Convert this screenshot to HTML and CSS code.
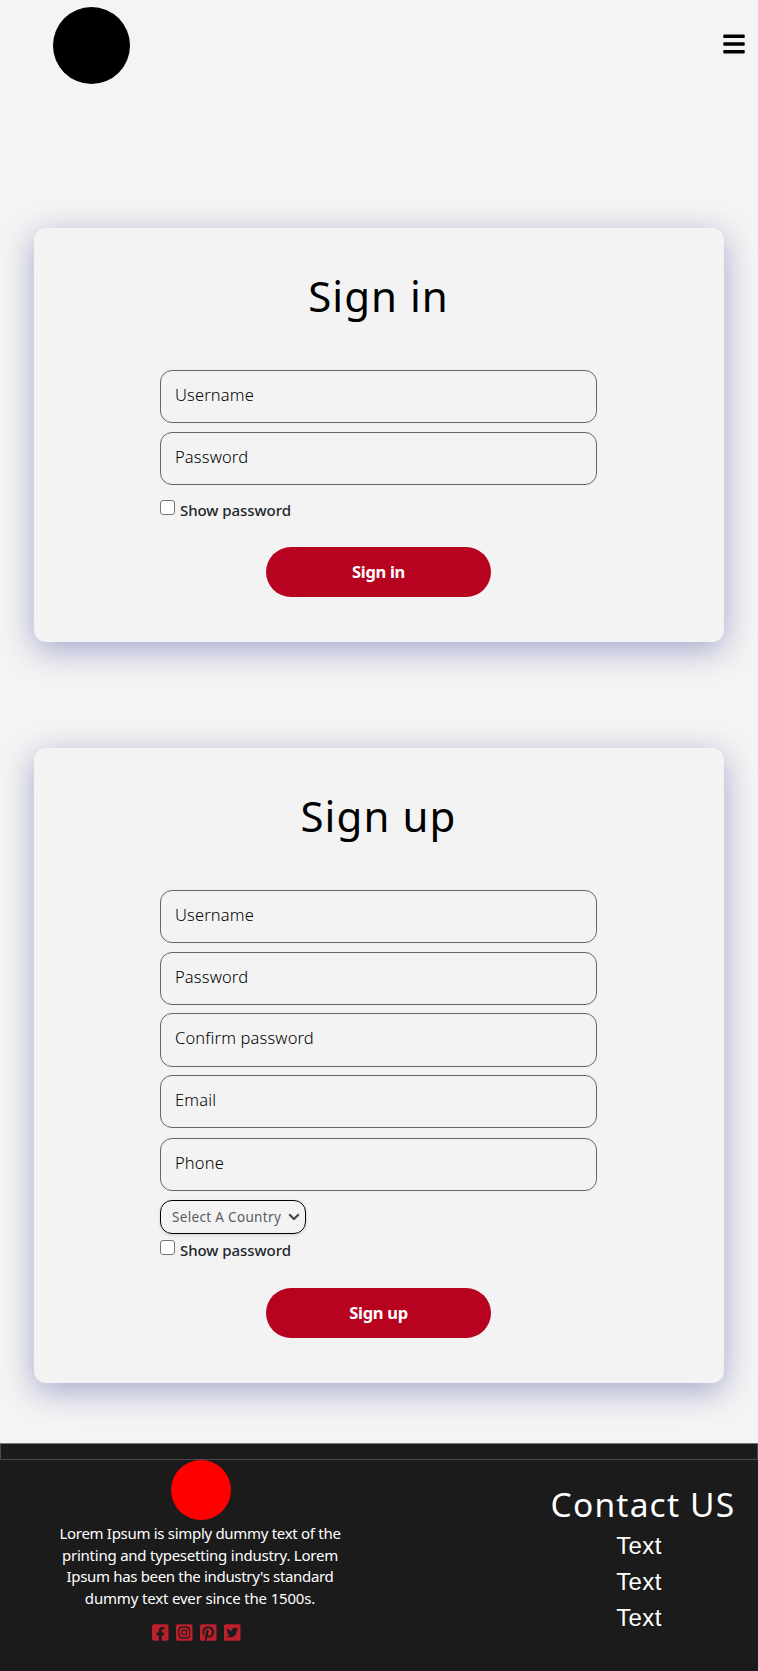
FILE: index.html
```html
<!DOCTYPE html>
<html lang="en">
<head>
<meta charset="utf-8">
<title>Sign in</title>
<link rel="stylesheet" href="styles.css">
</head>
<body>
<header class="header">
  <div class="logo"></div>
  <svg class="menu" viewBox="0 0 22 20"><path d="M1 .5h20q.7 0 .7.7v2.200q0 .6-.7.6H1q-.7 0-.7-.6V1.200Q.3.5 1 .5zM1 8.200h20q.7 0 .7.7V11q0 .7-.7.7H1q-.7 0-.7-.7V8.900q0-.7.7-.7zM1 16h20q.7 0 .7.600v2.200q0 .7-.7.7H1q-.7 0-.7-.7v-2.200Q.3 16 1 16z"/></svg>
</header>
<main class="main">
  <form class="card">
    <h2 class="title title-in">Sign in</h2>
    <div class="fields">
      <input class="field" type="text" placeholder="Username">
      <input class="field" type="text" placeholder="Password">
    </div>
    <label class="show"><input class="check" type="checkbox"><span>Show password</span></label>
    <button class="submit" type="button">Sign in</button>
  </form>
  <form class="card">
    <h2 class="title title-up">Sign up</h2>
    <div class="fields">
      <input class="field" type="text" placeholder="Username">
      <input class="field" type="text" placeholder="Password">
      <input class="field confirm" type="text" placeholder="Confirm password">
      <input class="field email" type="text" placeholder="Email">
      <input class="field" type="text" placeholder="Phone">
    </div>
    <div class="select"><span>Select A Country</span><svg class="chevron" viewBox="0 0 12 8"><path d="M1.200 1.200 6 6l4.800-4.800"/></svg></div>
    <label class="show show-tight"><input class="check" type="checkbox"><span>Show password</span></label>
    <button class="submit" type="button">Sign up</button>
  </form>
</main>
<footer class="footer">
  <div class="rule"></div>
  <div class="columns">
    <section class="about">
      <div class="badge"></div>
      <p class="blurb"><span class="l1">Lorem Ipsum is simply dummy text of the</span><br><span class="l2">printing and typesetting industry. Lorem</span><br><span class="l3">Ipsum has been the industry's standard</span><br><span class="l4">dummy text ever since the 1500s.</span></p>
      <div class="social">
        <svg viewBox="0 32 448 448"><path d="M400 32H48A48 48 0 0 0 0 80v352a48 48 0 0 0 48 48h137.250V327.690h-63V256h63v-54.640c0-62.150 37-96.480 93.670-96.480 27.140 0 55.520 4.840 55.520 4.840v61h-31.270c-30.810 0-40.420 19.120-40.420 38.730V256h68.780l-11 71.690h-57.780V480H400a48 48 0 0 0 48-48V80a48 48 0 0 0-48-48z"/></svg>
        <svg viewBox="0 32 448 448"><path fill-rule="evenodd" d="M48 32H400A48 48 0 0 1 448 80V432A48 48 0 0 1 400 480H48A48 48 0 0 1 0 432V80A48 48 0 0 1 48 32zM158 96Q64 96 64 190V322Q64 416 158 416H290Q384 416 384 322V190Q384 96 290 96zM158 125H290Q355 125 355 190V322Q355 387 290 387H158Q93 387 93 322V190Q93 125 158 125zM224 174a82 82 0 1 0 0 164a82 82 0 1 0 0-164zM224 202.700a53.300 53.300 0 1 1 0 106.600a53.300 53.300 0 1 1 0-106.600zM309.400 151.500a19.100 19.100 0 1 0 0 38.200a19.100 19.100 0 1 0 0-38.200z"/></svg>
        <svg viewBox="0 32 448 448"><path d="M448 80v352c0 26.500-21.500 48-48 48H154.400c9.800-16.400 22.400-40 27.400-59.300 3-11.500 15.300-58.400 15.300-58.400 8 15.300 31.400 28.200 56.300 28.200 74.100 0 127.400-68.100 127.400-152.700 0-81.100-66.200-141.800-151.400-141.800-106 0-162.200 71.100-162.200 148.600 0 36 19.200 80.800 49.800 95.100 4.700 2.200 7.100 1.200 8.200-3.300.8-3.400 5-20.100 6.800-27.800.6-2.500.3-4.600-1.700-7-10.100-12.300-18.300-34.900-18.300-56 0-54.200 41-106.600 110.900-106.600 60.300 0 102.600 41.100 102.600 99.900 0 66.400-33.500 112.400-77.200 112.400-24.100 0-42.100-19.900-36.400-44.400 6.900-29.200 20.300-60.700 20.300-81.800 0-53-75.500-45.700-75.500 25 0 21.700 7.300 36.500 7.300 36.500-31.400 132.800-36.100 134.500-29.600 192.600l2.200.8H48c-26.500 0-48-21.500-48-48V80c0-26.500 21.500-48 48-48h352c26.500 0 48 21.500 48 48z"/></svg>
        <svg viewBox="0 32 448 448"><path d="M400 32H48C21.500 32 0 53.500 0 80v352c0 26.500 21.500 48 48 48h352c26.500 0 48-21.500 48-48V80c0-26.500-21.500-48-48-48zm-48.900 158.800c.2 2.800.2 5.700.2 8.500 0 86.700-66 186.600-186.600 186.600-37.200 0-71.700-10.800-100.700-29.400 5.300.6 10.400.8 15.800.8 30.700 0 58.900-10.400 81.400-28-28.800-.6-53-19.500-61.300-45.500 10.100 1.500 19.200 1.500 29.600-1.200-30-6.100-52.500-32.500-52.500-64.400v-.8c8.700 4.900 18.900 7.900 29.600 8.300a65.447 65.447 0 0 1-29.200-54.600c0-12.200 3.200-23.400 8.900-33.100 32.300 39.800 80.800 65.800 135.200 68.600-9.300-44.500 24-80.600 64-80.600 18.900 0 35.900 7.900 47.900 20.700 14.800-2.800 29-8.300 41.600-15.800-4.900 15.200-15.200 28-28.800 36.100 13.200-1.400 26-5.100 37.800-10.200-8.900 13.100-20.100 24.700-32.900 34z"/></svg>
      </div>
    </section>
    <section class="contact">
      <h3 class="contact-title">Contact US</h3>
      <ul class="links"><li>Text</li><li>Text</li><li>Text</li></ul>
    </section>
  </div>
</footer>
</body>
</html>
```

FILE: styles.css
```css
* { box-sizing: border-box; }
body { margin: 0; background: #f4f4f4; font-family: "Noto Sans", sans-serif; color: #212529; }
.header { height: 228px; padding: 7px 13px 0 53px; display: flex; justify-content: space-between; align-items: flex-start; }
.logo { width: 77px; height: 77px; border-radius: 50%; background: #000; }
.menu { width: 22px; height: 20px; margin-top: 27px; }
.main { display: flex; flex-direction: column; gap: 106px; padding: 0 34px 60px; }
.card { display: flex; flex-direction: column; align-items: center; padding: 38px 127px 45px 126px; background: #f3f3f3; border-radius: 12px; box-shadow: 0 8px 32px rgba(31, 38, 135, .37); }
.title { margin: 0 0 44px; height: 60px; line-height: 60px; font-size: 42px; font-weight: 400; color: #000; white-space: nowrap; }
.title-in { letter-spacing: 1px; }
.title-up { letter-spacing: 1.100px; }
.fields { width: 437px; display: grid; gap: 9px; }
.field { width: 100%; height: 53px; padding: 0 14px 5px; border: 1px solid #666; border-radius: 12px; background: transparent; font: 300 16.500px "Noto Sans", sans-serif; letter-spacing: .15px; outline: 0; }
.field::placeholder { color: #000; opacity: 1; }
.confirm { height: 54px; margin: -1px 0 0; }
.email { margin-top: -1px; margin-bottom: 1px; }
.show { align-self: flex-start; display: flex; gap: 5px; margin-top: 15px; height: 21px; font-size: 15px; font-weight: 500; letter-spacing: -.05px; line-height: 21px; white-space: nowrap; }
.check { width: 15px; height: 15px; margin: 0; flex: none; appearance: none; border: 1px solid #767676; border-radius: 3px; background: #fff; }
.submit { width: 225px; height: 50px; margin-top: 26px; padding: 0 0 2px; border: 0; border-radius: 25px; background: #b70220; color: #fff; font: 700 16.500px "Noto Sans", sans-serif; letter-spacing: -.3px; }
.select { align-self: flex-start; width: 146px; height: 34px; margin-top: 9px; padding: 0 5px 0 11px; display: flex; align-items: center; justify-content: space-between; border: 1px solid #000; border-radius: 12px; box-shadow: 0 1px 3px rgba(0, 0, 0, .15); color: #5c5c5c; font-size: 13.500px; letter-spacing: .33px; white-space: nowrap; }
.chevron { width: 12px; height: 8px; fill: none; stroke: #444; stroke-width: 2; }
.show-tight { margin-top: 6px; }
.show-tight + .submit { margin-top: 27px; }
.footer { height: 228px; background: #1b1b1b; color: #fff; }
.rule { height: 17px; border: 1px solid #4a4a4a; border-top-color: #777; }
.columns { display: flex; justify-content: space-between; }
.about { width: 400px; display: flex; flex-direction: column; align-items: center; }
.badge { width: 60px; height: 60px; margin-left: 1px; border-radius: 50%; background: #f00; }
.blurb { margin: 3px 0 0; font-size: 15px; line-height: 21.600px; text-align: center; white-space: nowrap; }
.l1 { letter-spacing: -.3px; }
.l2 { letter-spacing: -.23px; }
.l3 { letter-spacing: -.33px; }
.l4 { letter-spacing: -.17px; }
.social { display: flex; gap: 7.500px; margin: 15px 7px 0 0; }
.social svg { width: 16.500px; height: 17px; fill: #bb202b; }
.contact { width: 230px; padding-top: 20px; text-align: center; }
.contact-title { margin: 0; height: 48px; line-height: 48px; font-size: 33.500px; font-weight: 400; letter-spacing: 1.200px; white-space: nowrap; }
.links { margin: 0; padding: 0 8px 0 0; list-style: none; font: 24px/36px "Liberation Sans", sans-serif; letter-spacing: .4px; }
```
